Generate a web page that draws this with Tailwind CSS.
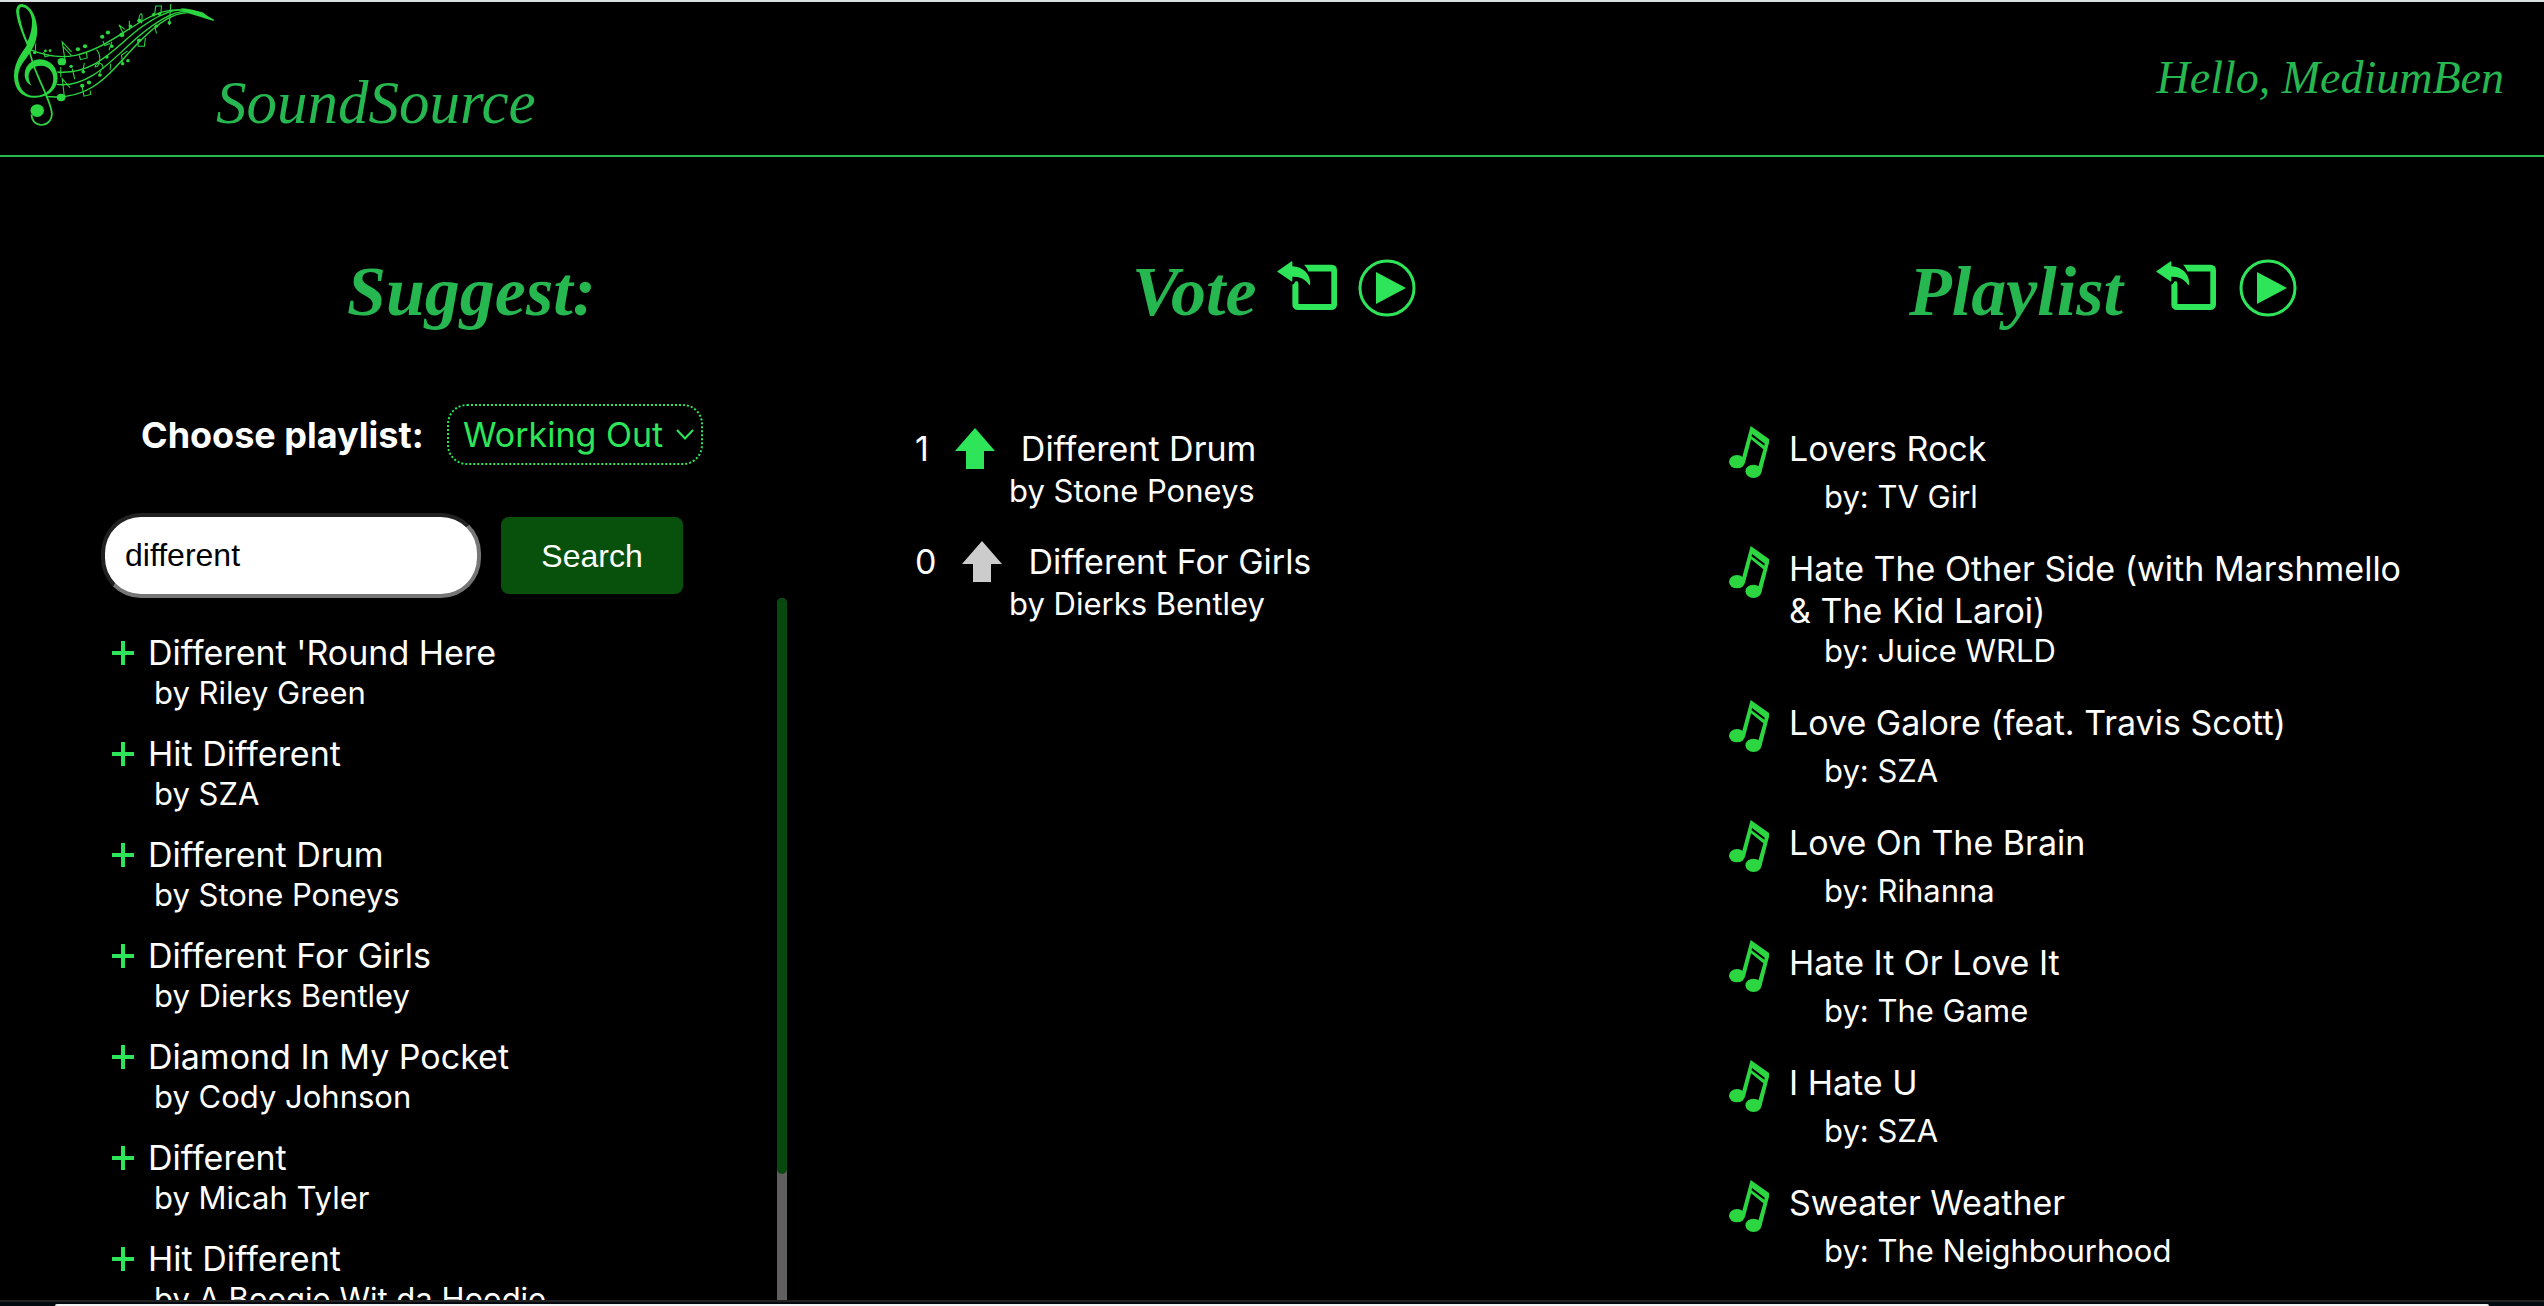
<!DOCTYPE html>
<html lang="en">
<head>
<meta charset="utf-8">
<meta name="viewport" content="width=device-width, initial-scale=1">
<title>SoundSource</title>
<script src="https://cdn.jsdelivr.net/npm/@tailwindcss/browser@4"></script>
</head>
<body class="flex h-screen flex-col overflow-hidden bg-black font-[Inter,sans-serif] text-[34px] leading-[42px] text-white">

<!-- Shared icons -->
<svg class="hidden" aria-hidden="true">
  <symbol id="note" viewBox="0 0 85 156" preserveAspectRatio="none">
    <ellipse cx="17" cy="107" rx="17" ry="20"/>
    <ellipse cx="52" cy="136" rx="17" ry="20"/>
    <path fill-rule="evenodd" d="M46 0 85 39V50L69 138H59L73 70 47 40 34 110H25ZM49 24 76 53 75 59 48 31Z"/>
  </symbol>
  <symbol id="leave" viewBox="0 0 168 146" preserveAspectRatio="none">
    <path d="M0 31 41 1Q43 0 43 3V16C73 17 94 40 93 68Q93 75 89 70C79 55 65 46 43 47V59Q43 62 40 60Z"/>
    <path d="M76 11H153Q168 12 168 28V130Q167 145 151 146H59Q44 145 43 130V70Q48 69 52 60H57Q60 63 60 70V128H152V31H88Q84 20 76 11Z"/>
  </symbol>
  <symbol id="play" viewBox="0 0 58 58">
    <circle cx="29" cy="29" r="27" fill="none" stroke="currentColor" stroke-width="3"/>
    <path d="M18 13 48 29 18 45Z"/>
  </symbol>
  <symbol id="up" viewBox="0 0 40 41">
    <path d="M20 0 40 23H29V41H11V23H0Z"/>
  </symbol>
  <symbol id="plus" viewBox="0 0 22 24">
    <path d="M9 0h4v10h9v4h-9v10H9V14H0v-4h9Z"/>
  </symbol>
</svg>

<header class="flex h-[157px] shrink-0 items-start justify-between border-y-2 border-t-[#dcdfe0] border-b-[#27b750] pr-10 pl-[14px] font-['Apple_Chancery','Liberation_Serif',serif] text-[#27b750] italic">
  <a href="#" class="flex items-start">
    <svg class="mt-[2px] h-[122px] w-[200px] text-[#2cd641]" viewBox="39 12 560 364" preserveAspectRatio="none" fill="currentColor" aria-hidden="true">
      <path fill-rule="evenodd" d="M60 12C84 13 104 48 104 91C104 128 87 155 70 178C57 196 49 212 51 237C54 270 75 287 99 286C130 285 149 262 149 235C149 212 135 197 115 196C93 196 79 211 80 229C80 240 84 248 88 255C74 249 68 235 69 219C71 194 90 177 112 177C142 178 161 203 161 233C160 266 136 291 98 292C60 293 38 265 39 224C40 180 67 150 75 134C64 107 48 68 45 36C45 20 51 12 60 12ZM59 21C53 23 52 34 56 54C61 82 69 106 77 124C86 101 91 80 89 57C85 32 71 20 59 21Z"/>
      <path fill="none" stroke="currentColor" stroke-width="5" d="M77 130 C85 165 90 190 104 222C120 264 144 312 145 339C145 360 131 373 116 373C98 372 88 358 88 342"/>
      <ellipse cx="104" cy="330" rx="19" ry="19"/>
      <g fill="none" stroke="currentColor" stroke-width="4">
        <path d="M84 148C180 190 245 165 330 108S480 -8 598 60"/>
        <path d="M160 215C270 225 325 135 397 80S510 20 570 40" />
        <path d="M158 252C260 265 330 155 402 96S510 22 570 42"/>
        <path d="M128 288C260 302 305 218 383 132S505 25 575 44"/>
      </g>
      <path d="M505 25C540 25 575 40 599 62C580 58 560 49 530 40Z"/>
      <ellipse cx="173" cy="184" rx="12" ry="11"/><ellipse cx="171" cy="291" rx="12" ry="11"/><ellipse cx="341" cy="104" rx="7" ry="7"/>
      <g fill="none" stroke="currentColor" stroke-width="3">
        <path d="M182 180 174 125 200 155M176 138 200 166M180 288 174 235 196 262M345 100 333 74 349 88M388 62C390 40 402 25 396 70M432 48 436 18 452 18 450 42M385 118 387 138 404 138 407 114M222 165 225 178 244 173 242 158M230 260 235 287 254 282 252 270M236 188 231 216M270 148C285 165 280 200 266 200C270 180 290 188 288 206M343 190 340 165 357 152M474 75 478 10M433 78 438 100M288 122 293 136 308 130M305 150 313 125M100 130 98 160M122 155 126 170 140 166M202 205 209 236M310 190 308 208M276 228 282 210M362 90 362 62M170 200V230"/>
      </g>
      <circle cx="218" cy="147" r="6"/><circle cx="238" cy="138" r="6"/><circle cx="286" cy="110" r="6"/><circle cx="302" cy="97" r="6"/><circle cx="230" cy="256" r="6"/><circle cx="249" cy="246" r="6"/><circle cx="233" cy="214" r="5"/><circle cx="199" cy="198" r="5"/><circle cx="343" cy="190" r="5"/><circle cx="358" cy="181" r="5"/><circle cx="313" cy="138" r="5"/><circle cx="299" cy="170" r="5"/><circle cx="280" cy="224" r="5"/><circle cx="430" cy="44" r="5"/><circle cx="446" cy="42" r="5"/><circle cx="365" cy="78" r="5"/><circle cx="438" cy="78" r="5"/><circle cx="474" cy="68" r="5"/><circle cx="390" cy="62" r="6"/><circle cx="390" cy="120" r="5"/><circle cx="127" cy="152" r="4"/><circle cx="140" cy="151" r="4"/><circle cx="97" cy="157" r="5"/>
    </svg>
    <span class="mt-[68px] ml-[2px] text-[61px] leading-[66px]">SoundSource</span>
  </a>
  <span class="mt-[49px] text-[46px] leading-[54px]">Hello, MediumBen</span>
</header>

<main class="grid min-h-0 flex-1 grid-cols-3 pt-[95px]">

  <section class="flex min-h-0 flex-col pr-[61px] pl-[101px]">
    <h2 class="pl-[246px] font-['Apple_Chancery','Liberation_Serif',serif] text-[70px] leading-[80px] font-bold text-[#27b750] italic">Suggest:</h2>

    <div class="mt-[72px] flex items-center gap-[22px] pl-10">
      <label for="playlist" class="w-[284px] text-[36px] font-bold whitespace-nowrap">Choose playlist:</label>
      <div class="relative">
        <select id="playlist" class="block h-[61px] w-[256px] appearance-none rounded-[20px] border-2 border-dotted border-[#2ee559] bg-black pl-[14px] text-[#2ee559]">
          <option>Working Out</option>
        </select>
        <svg class="pointer-events-none absolute top-[25px] right-[9px] h-[11px] w-[18px]" viewBox="0 0 18 11" fill="none" stroke="#2ee559" stroke-width="2" aria-hidden="true"><path d="M1 1 9 9.500 17 1"/></svg>
      </div>
    </div>

    <form class="mt-[48px] flex items-center gap-5 font-['Liberation_Sans',Arial,sans-serif] text-[32px]" onsubmit="return false">
      <input type="text" aria-label="Search songs" value="different" class="h-[85px] w-[380px] rounded-[40px] border-4 border-t-[#212121] border-r-[#767676] border-b-[#767676] border-l-[#212121] bg-white px-5 text-black">
      <button type="submit" class="h-[77px] w-[182px] rounded-lg bg-[#08510c]">Search</button>
    </form>

    <div class="flex min-h-0 flex-1 justify-between">
      <ul class="flex flex-col gap-[21px] overflow-hidden pt-[34px] pl-[11px]">
        <li><div class="flex items-center gap-[14px]"><button aria-label="Add"><svg class="h-6 w-[22px] fill-[#2ee559]"><use href="#plus"/></svg></button><span>Different 'Round Here</span></div><p class="pl-[42px] text-[31px] leading-[38px]">by Riley Green</p></li>
        <li><div class="flex items-center gap-[14px]"><button aria-label="Add"><svg class="h-6 w-[22px] fill-[#2ee559]"><use href="#plus"/></svg></button><span>Hit Different</span></div><p class="pl-[42px] text-[31px] leading-[38px]">by SZA</p></li>
        <li><div class="flex items-center gap-[14px]"><button aria-label="Add"><svg class="h-6 w-[22px] fill-[#2ee559]"><use href="#plus"/></svg></button><span>Different Drum</span></div><p class="pl-[42px] text-[31px] leading-[38px]">by Stone Poneys</p></li>
        <li><div class="flex items-center gap-[14px]"><button aria-label="Add"><svg class="h-6 w-[22px] fill-[#2ee559]"><use href="#plus"/></svg></button><span>Different For Girls</span></div><p class="pl-[42px] text-[31px] leading-[38px]">by Dierks Bentley</p></li>
        <li><div class="flex items-center gap-[14px]"><button aria-label="Add"><svg class="h-6 w-[22px] fill-[#2ee559]"><use href="#plus"/></svg></button><span>Diamond In My Pocket</span></div><p class="pl-[42px] text-[31px] leading-[38px]">by Cody Johnson</p></li>
        <li><div class="flex items-center gap-[14px]"><button aria-label="Add"><svg class="h-6 w-[22px] fill-[#2ee559]"><use href="#plus"/></svg></button><span>Different</span></div><p class="pl-[42px] text-[31px] leading-[38px]">by Micah Tyler</p></li>
        <li><div class="flex items-center gap-[14px]"><button aria-label="Add"><svg class="h-6 w-[22px] fill-[#2ee559]"><use href="#plus"/></svg></button><span>Hit Different</span></div><p class="pl-[42px] text-[31px] leading-[38px]">by A Boogie Wit da Hoodie</p></li>
      </ul>
      <!-- Scroll track and thumb -->
      <div class="w-[10px] rounded-t-full bg-[#605e5e]"><div class="h-[82%] rounded-full bg-[#06480e]"></div></div>
    </div>
  </section>

  <section class="pl-[67px]">
    <div class="flex items-start pl-[217px] text-[#2ee559]">
      <h2 class="w-[145px] font-['Apple_Chancery','Liberation_Serif',serif] text-[70px] leading-[80px] font-bold text-[#27b750] italic">Vote</h2>
      <button aria-label="Leave vote" class="mt-[9px]"><svg class="h-[49px] w-[60px] fill-current"><use href="#leave"/></svg></button>
      <button aria-label="Play" class="mt-[7px] ml-[21px]"><svg class="size-[58px] fill-current"><use href="#play"/></svg></button>
    </div>
    <ul class="mt-[96px] flex flex-col gap-[31px]">
      <li><div class="flex h-[44px] items-start"><span class="mr-[26px]">1</span><button aria-label="Upvote"><svg class="h-[41px] w-10 fill-[#2ee559]"><use href="#up"/></svg></button><span class="ml-[26px]">Different Drum</span></div><p class="pl-[94px] text-[31px] leading-[38px]">by Stone Poneys</p></li>
      <li><div class="flex h-[44px] items-start"><span class="mr-[26px]">0</span><button aria-label="Upvote"><svg class="h-[41px] w-10 fill-[#cccccc]"><use href="#up"/></svg></button><span class="ml-[26px]">Different For Girls</span></div><p class="pl-[94px] text-[31px] leading-[38px]">by Dierks Bentley</p></li>
    </ul>
  </section>

  <section class="pr-[114px] pl-[33px]">
    <div class="flex items-start pl-[180px] text-[#2ee559]">
      <h2 class="w-[247px] font-['Apple_Chancery','Liberation_Serif',serif] text-[70px] leading-[80px] font-bold text-[#27b750] italic">Playlist</h2>
      <button aria-label="Leave playlist" class="mt-[9px]"><svg class="h-[49px] w-[60px] fill-current"><use href="#leave"/></svg></button>
      <button aria-label="Play" class="mt-[7px] ml-[23px]"><svg class="size-[58px] fill-current"><use href="#play"/></svg></button>
    </div>
    <ul class="mt-[94px] flex flex-col gap-[30px]">
      <li><div class="flex min-h-[52px] gap-5"><svg class="h-[52px] w-10 shrink-0 fill-[#2cd641]" aria-hidden="true"><use href="#note"/></svg><span class="pt-[2px]">Lovers Rock</span></div><p class="pl-[95px] text-[31px] leading-[38px]">by: TV Girl</p></li>
      <li><div class="flex min-h-[52px] gap-5"><svg class="h-[52px] w-10 shrink-0 fill-[#2cd641]" aria-hidden="true"><use href="#note"/></svg><span class="pt-[2px]">Hate The Other Side (with Marshmello &amp; The Kid Laroi)</span></div><p class="pl-[95px] text-[31px] leading-[38px]">by: Juice WRLD</p></li>
      <li><div class="flex min-h-[52px] gap-5"><svg class="h-[52px] w-10 shrink-0 fill-[#2cd641]" aria-hidden="true"><use href="#note"/></svg><span class="pt-[2px]">Love Galore (feat. Travis Scott)</span></div><p class="pl-[95px] text-[31px] leading-[38px]">by: SZA</p></li>
      <li><div class="flex min-h-[52px] gap-5"><svg class="h-[52px] w-10 shrink-0 fill-[#2cd641]" aria-hidden="true"><use href="#note"/></svg><span class="pt-[2px]">Love On The Brain</span></div><p class="pl-[95px] text-[31px] leading-[38px]">by: Rihanna</p></li>
      <li><div class="flex min-h-[52px] gap-5"><svg class="h-[52px] w-10 shrink-0 fill-[#2cd641]" aria-hidden="true"><use href="#note"/></svg><span class="pt-[2px]">Hate It Or Love It</span></div><p class="pl-[95px] text-[31px] leading-[38px]">by: The Game</p></li>
      <li><div class="flex min-h-[52px] gap-5"><svg class="h-[52px] w-10 shrink-0 fill-[#2cd641]" aria-hidden="true"><use href="#note"/></svg><span class="pt-[2px]">I Hate U</span></div><p class="pl-[95px] text-[31px] leading-[38px]">by: SZA</p></li>
      <li><div class="flex min-h-[52px] gap-5"><svg class="h-[52px] w-10 shrink-0 fill-[#2cd641]" aria-hidden="true"><use href="#note"/></svg><span class="pt-[2px]">Sweater Weather</span></div><p class="pl-[95px] text-[31px] leading-[38px]">by: The Neighbourhood</p></li>
    </ul>
  </section>
</main>

<!-- Window edge with the dock below it -->
<footer class="h-[6px] shrink-0 border-t-2 border-[#222222] bg-[#020a10] px-[55px] pt-[2px]"><div class="h-[2px] rounded-t-lg bg-[#f2f2f2]"></div></footer>
</body>
</html>
